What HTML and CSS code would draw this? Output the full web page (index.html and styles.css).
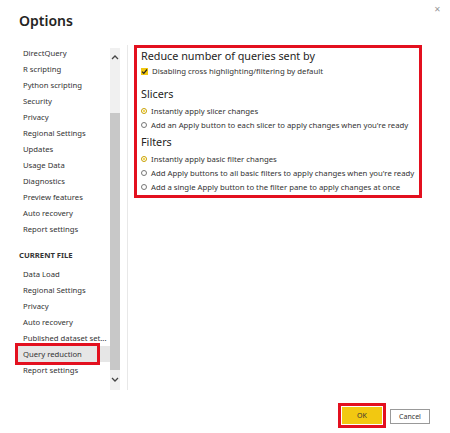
FILE: index.html
```html
<!DOCTYPE html>
<html lang="en">
<head>
    <meta charset="UTF-8">
    <title>Options</title>
    <link rel="stylesheet" href="styles.css">
</head>
<body>
    <div class="dialog">
        <div class="header">
            <h1>Options</h1>
            <span class="close">&#x2715;</span>
        </div>

        <div class="main">
            <div class="nav">
                <ul class="nav-list">
                    <li>DirectQuery</li>
                    <li>R scripting</li>
                    <li>Python scripting</li>
                    <li>Security</li>
                    <li>Privacy</li>
                    <li>Regional Settings</li>
                    <li>Updates</li>
                    <li>Usage Data</li>
                    <li>Diagnostics</li>
                    <li>Preview features</li>
                    <li>Auto recovery</li>
                    <li>Report settings</li>
                </ul>
                <div class="nav-title">CURRENT FILE</div>
                <ul class="nav-list">
                    <li>Data Load</li>
                    <li>Regional Settings</li>
                    <li>Privacy</li>
                    <li>Auto recovery</li>
                    <li>Published dataset set...</li>
                    <li class="active">Query reduction</li>
                    <li>Report settings</li>
                </ul>
            </div>
            <div class="scrollbar">
                <svg class="arrow" width="8" height="6" viewBox="0 0 8 6"><path d="M1 5 L4 2 L7 5" fill="none" stroke="#444" stroke-width="1.3"/></svg>
                <div class="thumb"></div>
                <svg class="arrow" width="8" height="6" viewBox="0 0 8 6"><path d="M1 1 L4 4 L7 1" fill="none" stroke="#444" stroke-width="1.3"/></svg>
            </div>
            <div class="divider"></div>

            <div class="content">
                <div class="panel">
                    <h2>Reduce number of queries sent by</h2>
                    <div class="option">
                        <span class="check">
                            <svg width="7" height="7" viewBox="0 0 7 7"><path d="M1 3.6 L2.8 5.3 L6 1.5" fill="none" stroke="#252423" stroke-width="1.2"/></svg>
                        </span>
                        Disabling cross highlighting/filtering by default
                    </div>

                    <h3>Slicers</h3>
                    <div class="option"><span class="radio on"></span>Instantly apply slicer changes</div>
                    <div class="option"><span class="radio"></span>Add an Apply button to each slicer to apply changes when you're ready</div>

                    <h3 class="tight">Filters</h3>
                    <div class="option"><span class="radio on"></span>Instantly apply basic filter changes</div>
                    <div class="option"><span class="radio"></span>Add Apply buttons to all basic filters to apply changes when you're ready</div>
                    <div class="option"><span class="radio"></span>Add a single Apply button to the filter pane to apply changes at once</div>
                </div>
            </div>
        </div>

        <div class="footer">
            <button class="btn primary">OK</button>
            <button class="btn">Cancel</button>
        </div>
    </div>
</body>
</html>
```

FILE: styles.css
```css
body {
    margin: 0;
    font-family: "Noto Sans", "Open Sans", sans-serif;
    color: #333;
    background: #fff;
}
.dialog {
    width: 450px;
    height: 433px;
    display: flex;
    flex-direction: column;
}
.header {
    height: 45px;
    position: relative;
}
.header h1 {
    margin: 0;
    padding: 11px 0 0 19px;
    font-size: 14px;
    font-weight: 600;
    color: #252423;
}
.close {
    position: absolute;
    top: 3px;
    right: 9px;
    font-size: 8px;
    color: #999;
}
.main {
    display: flex;
    height: 345px;
}
.nav {
    width: 110px;
    font-size: 7.7px;
}
.nav-list {
    list-style: none;
    margin: 0;
    padding: 0;
}
.nav-list li {
    height: 16px;
    line-height: 16px;
    padding-left: 23px;
    white-space: nowrap;
    position: relative;
}
.nav-list li.active {
    background: #e6e6e6;
    margin-left: 18px;
    padding-left: 5px;
}
.nav-list li.active::after {
    content: "";
    position: absolute;
    left: -3px;
    top: -3px;
    width: 79px;
    height: 16px;
    border: 3px solid #e3101f;
}
.nav-title {
    padding: 13px 0 5px 19px;
    font-weight: 700;
    font-size: 7.7px;
    line-height: 11px;
    color: #333;
}
.scrollbar {
    width: 10px;
    margin-top: 3px;
    background: #f0f0f0;
    display: flex;
    flex-direction: column;
    align-items: center;
}
.arrow {
    margin: 6px 0;
}
.thumb {
    align-self: stretch;
    flex: 1;
    margin: 47px 0 3px;
    background: #c8c8c8;
}
.scrollbar .arrow:last-child {
    margin: 4px 0 7px;
}
.divider {
    width: 1px;
    margin-left: 7px;
    background: #e8e8e8;
}
.content {
    padding-left: 6px;
}
.panel {
    width: 278px;
    height: 147px;
    border: 3px solid #e3101f;
    padding: 0 0 0 4px;
    font-size: 7.75px;
}
.panel h2 {
    margin: 0;
    font-size: 10.8px;
    font-weight: 400;
    line-height: 16px;
    color: #252423;
}
.panel h3 {
    margin: 8px 0 2px;
    font-size: 10.8px;
    font-weight: 400;
    line-height: 16px;
    color: #252423;
}
.panel h3.tight {
    margin-top: 2px;
}
.option {
    display: flex;
    align-items: center;
    height: 14px;
    white-space: nowrap;
    color: #333;
}
.check {
    width: 7px;
    height: 7px;
    background: #f2c811;
    margin-right: 4px;
    display: flex;
}
.radio {
    width: 6px;
    height: 6px;
    border: 1px solid #777;
    border-radius: 50%;
    margin-right: 4px;
    box-sizing: border-box;
    flex: none;
    position: relative;
}
.radio.on {
    border-color: #c8a000;
    background: #fff;
}
.radio.on::after {
    content: "";
    position: absolute;
    left: 1px;
    top: 1px;
    width: 2px;
    height: 2px;
    border-radius: 50%;
    background: #f2c811;
}
.footer {
    flex: 1;
    display: flex;
    justify-content: flex-end;
    align-items: flex-start;
    gap: 8px;
    padding: 19px 20px 0 0;
}
.btn {
    width: 40px;
    height: 15px;
    padding: 0;
    font-family: inherit;
    font-size: 7px;
    color: #333;
    background: #fff;
    border: 1px solid #999;
}
.btn.primary {
    background: #f2c811;
    border: none;
    outline: 3px solid #e3101f;
    outline-offset: 1px;
    height: 17px;
    margin-top: -2px;
}
```
